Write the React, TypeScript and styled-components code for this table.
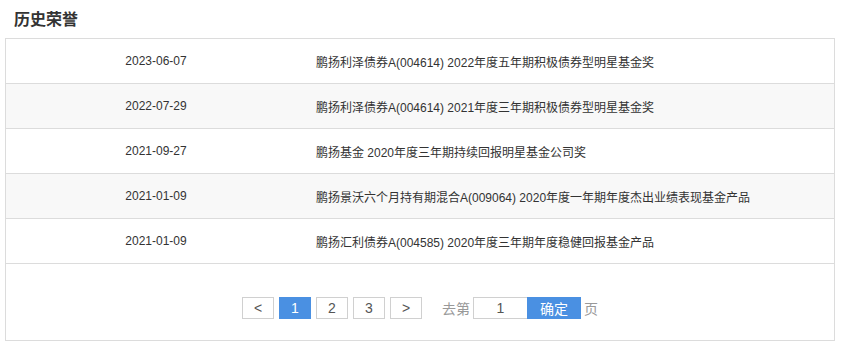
import React from "react";
import styled, { createGlobalStyle } from "styled-components";

const Global = createGlobalStyle`
  html, body { margin: 0; padding: 0; background: #fff; }
  body { font-family: "Liberation Sans", Arial, "Noto Sans CJK SC", sans-serif; color: #333; }
`;

const Page = styled.div`
  padding: 0 6px 0 5px;
  width: 830px;
`;

const Title = styled.h2`
  margin: 0;
  padding: 6px 0 0 9px;
  height: 38px;
  box-sizing: border-box;
  font-size: 16px;
  font-weight: bold;
  line-height: 24px;
  color: #333;
  font-family: "Noto Sans CJK SC", sans-serif;
`;

const Panel = styled.div`
  border: 1px solid #dcdcdc;
  width: 828px;
`;

const Row = styled.div<{ $alt: boolean }>`
  display: grid;
  grid-template-columns: 300px 1fr;
  height: 44px;
  align-items: center;
  border-bottom: 1px solid #dcdcdc;
  background: ${(p) => (p.$alt ? "#f8f8f8" : "#fff")};
  font-size: 12px;
  color: #333;
`;

const DateCell = styled.div`
  text-align: center;
  font-family: "Liberation Sans", Arial, sans-serif;
`;

const NameCell = styled.div`
  padding-left: 10px;
  font-family: "Liberation Sans", Arial, "Noto Sans CJK SC", sans-serif;
`;

const Pager = styled.div`
  height: 76px;
  box-sizing: border-box;
  padding-top: 33px;
  display: flex;
  justify-content: center;
  align-items: flex-start;
`;

const PageBtn = styled.div<{ $active?: boolean }>`
  width: 32px;
  height: 22px;
  box-sizing: border-box;
  margin-right: 5px;
  border: 1px solid ${(p) => (p.$active ? "#4a90e2" : "#d0d0d0")};
  background: ${(p) => (p.$active ? "#4a90e2" : "#fff")};
  color: ${(p) => (p.$active ? "#fff" : "#555")};
  font-size: 14px;
  line-height: 20px;
  text-align: center;
  font-family: "Liberation Sans", Arial, sans-serif;
`;

const GoLabel = styled.span`
  margin-left: 15px;
  font-size: 14px;
  line-height: 22px;
  color: #999;
  font-family: "Noto Sans CJK SC", sans-serif;
  margin-right: 3px;
`;

const GoInput = styled.div`
  width: 54px;
  height: 22px;
  box-sizing: border-box;
  border: 1px solid #d0d0d0;
  border-right: none;
  font-size: 14px;
  line-height: 20px;
  text-align: center;
  color: #555;
  font-family: "Liberation Sans", Arial, sans-serif;
`;

const GoBtn = styled.div`
  width: 54px;
  height: 22px;
  background: #4a90e2;
  color: #fff;
  font-size: 14px;
  line-height: 22px;
  text-align: center;
  font-family: "Noto Sans CJK SC", sans-serif;
`;

const PageLabel = styled.span`
  margin-left: 3px;
  font-size: 14px;
  line-height: 22px;
  color: #999;
  font-family: "Noto Sans CJK SC", sans-serif;
`;

const rows = [
  ["2023-06-07", "鹏扬利泽债券A(004614) 2022年度五年期积极债券型明星基金奖"],
  ["2022-07-29", "鹏扬利泽债券A(004614) 2021年度三年期积极债券型明星基金奖"],
  ["2021-09-27", "鹏扬基金 2020年度三年期持续回报明星基金公司奖"],
  ["2021-01-09", "鹏扬景沃六个月持有期混合A(009064) 2020年度一年期年度杰出业绩表现基金产品"],
  ["2021-01-09", "鹏扬汇利债券A(004585) 2020年度三年期年度稳健回报基金产品"],
];

export default function App() {
  return (
    <Page>
      <Global />
      <Title>历史荣誉</Title>
      <Panel>
        {rows.map(([d, n], i) => (
          <Row key={i} $alt={i % 2 === 1}>
            <DateCell>{d}</DateCell>
            <NameCell>{n}</NameCell>
          </Row>
        ))}
        <Pager>
          <PageBtn>&lt;</PageBtn>
          <PageBtn $active>1</PageBtn>
          <PageBtn>2</PageBtn>
          <PageBtn>3</PageBtn>
          <PageBtn>&gt;</PageBtn>
          <GoLabel>去第</GoLabel>
          <GoInput>1</GoInput>
          <GoBtn>确定</GoBtn>
          <PageLabel>页</PageLabel>
        </Pager>
      </Panel>
    </Page>
  );
}
